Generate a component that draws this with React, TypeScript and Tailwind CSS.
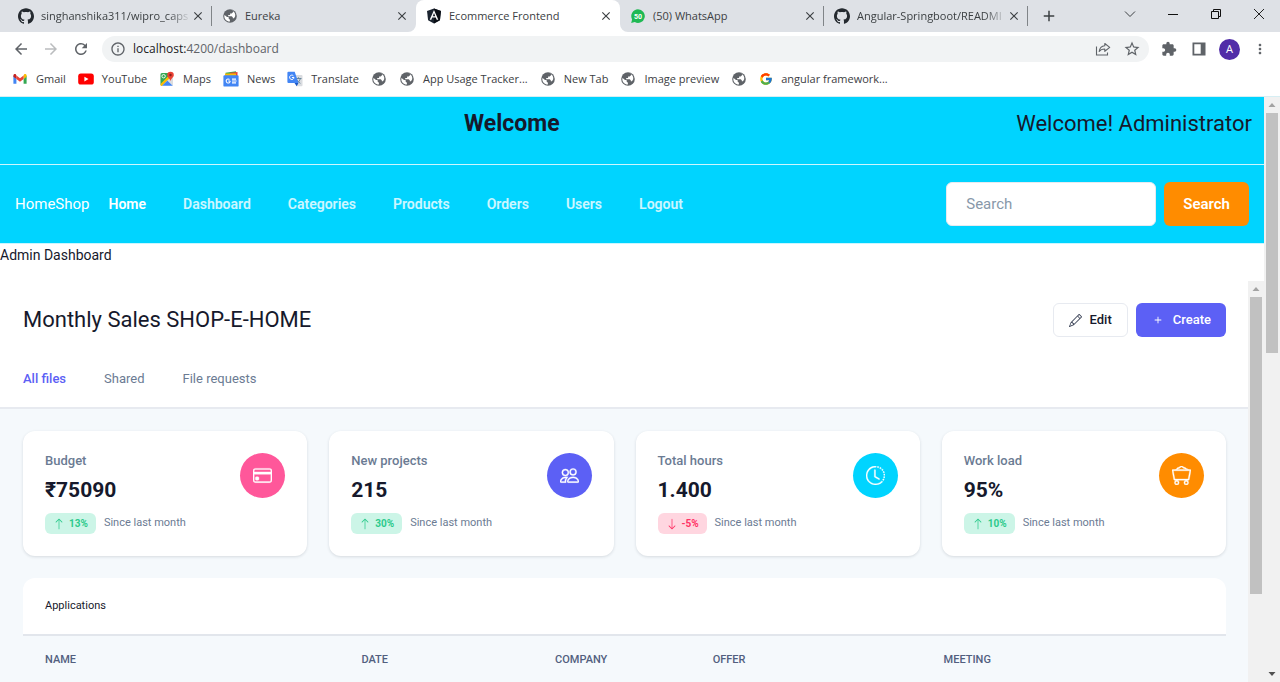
import React from "react";
import {
  BsArrowDown,
  BsArrowUp,
  BsClockHistory,
  BsCreditCard,
  BsMinecartLoaded,
  BsPencil,
  BsPlus,
} from "react-icons/bs";
import { SiGithub } from "react-icons/si";
import { FcGoogle } from "react-icons/fc";
import {
  MdArrowBack,
  MdArrowForward,
  MdAdd,
  MdClose,
  MdExtension,
  MdInfoOutline,
  MdMoreVert,
  MdRefresh,
  MdStarBorder,
} from "react-icons/md";

/* ---------- Browser icons ---------- */

function Globe() {
  return (
    <svg viewBox="0 0 16 16" className="size-4 shrink-0" aria-hidden="true">
      <circle cx="8" cy="8" r="6.8" fill="#5f6368" />
      <path
        d="M2.6 6.9 5 9.1h1.6v1.5l1.3 1.2v1.7c-3 .2-5.7-2.3-5.6-5.5zM7.2 2.5l3.4.1.6 1.3-1.5 1.7H8.1v1.5H6.2v1.1h3.5l1.1 1.1v.9h1.2l1.2-1.9c.6-2.6-1-5-3.2-5.8z"
        fill="#fff"
      />
    </svg>
  );
}

function AngularLogo() {
  return (
    <svg viewBox="0 0 16 16" className="size-4 shrink-0" aria-hidden="true">
      <path d="M8 .4 15 2.9 13.9 12.3 8 15.6 2.1 12.3 1 2.9z" fill="#1b2430" />
      <path d="M8 .4v15.2l5.9-3.3L15 2.9z" fill="#0b0f16" />
      <path
        d="M8 2.1 3.7 11.8h1.6l.9-2.2h3.6l.9 2.2h1.6zM8 5.1l1.2 3.2H6.8z"
        fill="#fff"
        fillRule="evenodd"
      />
    </svg>
  );
}

function WhatsApp() {
  return (
    <svg viewBox="0 0 16 16" className="size-4 shrink-0" aria-hidden="true">
      <path
        d="M8 1.3a6.8 6.8 0 1 1-3.2 12.8L1.2 14.9l.9-3.5A6.8 6.8 0 0 1 8 1.3z"
        fill="#1fb954"
      />
      <text
        x="8"
        y="10.6"
        textAnchor="middle"
        fill="#fff"
        fontFamily="Roboto, sans-serif"
        fontWeight="700"
        fontSize="7"
      >
        50
      </text>
    </svg>
  );
}

function Gmail() {
  return (
    <svg viewBox="0 0 16 16" className="size-4 shrink-0" aria-hidden="true">
      <path d="M1.4 4.5v8.3h3V8z" fill="#4285f4" />
      <path d="M14.6 4.5v8.3h-3V8z" fill="#34a853" />
      <path d="M11.6 4.6V8l3-2.3V4.500c0-1.300-1.400-1.900-2.400-1.200z" fill="#fbbc04" />
      <path d="M4.4 8V4.600L8 7.200l3.600-2.600V8L8 10.700z" fill="#ea4335" />
      <path d="M1.4 4.500v1.200L4.400 8V4.600l-.6-1.300c-1-.7-2.400-.1-2.400 1.200z" fill="#c5221f" />
    </svg>
  );
}

function YouTube() {
  return (
    <svg viewBox="0 0 16 16" className="size-4 shrink-0" aria-hidden="true">
      <rect x=".2" y="2.600" width="15.600" height="10.900" rx="2.600" fill="#f00" />
      <path d="M6.400 5.700v4.700L10.500 8z" fill="#fff" />
    </svg>
  );
}

function Maps() {
  return (
    <svg viewBox="0 0 16 16" className="size-4 shrink-0" aria-hidden="true">
      <path d="M1.500 2.500H14v12H1.500z" fill="#e8eaed" />
      <path d="M1.500 3.500A1.500 1.500 0 0 1 3 2h7L9 6l-7.500 8z" fill="#34a853" />
      <path d="m1.500 13 9-9L12 6l-9 9h-.5a1 1 0 0 1-1-1z" fill="#fbbc04" />
      <path d="m3 14.700 5.500-5.200 5.300 5.200z" fill="#4285f4" />
      <path d="m8.500 9.500 5.500 5V7z" fill="#dadce0" />
      <circle cx="4.600" cy="5.200" r="1.700" fill="none" stroke="#fff" strokeWidth=".9" />
      <path d="M11.500.7A3.300 3.300 0 0 1 14.800 4c0 2.600-2.500 3-3.300 6-.8-3-3.300-3.400-3.300-6A3.300 3.300 0 0 1 11.500.7z" fill="#ea4335" />
      <circle cx="11.500" cy="4" r="1.200" fill="#8c1d18" />
    </svg>
  );
}

function News() {
  return (
    <svg viewBox="0 0 16 16" className="size-4 shrink-0" aria-hidden="true">
      <path d="M2.500 1.700 13 .3v4.400H3z" fill="#34a853" />
      <path d="M7 1.700 14.500 1v5H7z" fill="#ea4335" />
      <path d="M2 2.500h11V7H2z" fill="#fbbc04" />
      <rect x=".4" y="4.200" width="15.200" height="11.400" rx="1.200" fill="#4285f4" />
      <path d="M7.200 10H5.200m1.300-1.500a2 2 0 1 0 .7 1.500" fill="none" stroke="#fff" strokeWidth="1.100" />
      <path d="M9 8.100h4M9 10h4.600M9 11.900h4" stroke="#fff" strokeWidth="1.100" />
    </svg>
  );
}

function Translate() {
  return (
    <svg viewBox="0 0 16 16" className="size-4 shrink-0" aria-hidden="true">
      <path d="M6 4h8.500a1 1 0 0 1 1 1v9.300a1 1 0 0 1-1 1h-5z" fill="#dadce0" />
      <path d="M8.500 7.500h6M11.500 6.300v1.200M13.300 7.600c-.4 2-2 3.800-3.600 4.600M9.800 8.800c.8 1.600 2.200 2.800 3.600 3.500" fill="none" stroke="#5f7f95" strokeWidth=".9" />
      <path d="M1.400.7h6.300l3.800 11.400H1.400a1 1 0 0 1-1-1V1.700a1 1 0 0 1 1-1z" fill="#4285f4" />
      <path d="m7.500 12.100 2.200 3.200 1.800-3.200z" fill="#1a56c4" />
      <path d="M7 6.500H4.900m1.500-1.700A2.200 2.200 0 1 0 7 6.500" fill="none" stroke="#fff" strokeWidth="1" />
    </svg>
  );
}

function Share() {
  return (
    <svg viewBox="0 0 16 16" className="size-4" fill="none" stroke="#5f6368" strokeWidth="1.100" aria-hidden="true">
      <path d="M1.500 5.500V14h11v-2.500" />
      <path d="M9.800 2.500 14.700 6.400 9.800 10.300V8c-2.600 0-4.400.7-5.600 2.500.4-3.300 2.300-5.400 5.600-5.700z" strokeLinejoin="round" />
    </svg>
  );
}

function SidePanel() {
  return (
    <svg viewBox="0 0 16 16" className="size-4" aria-hidden="true">
      <path d="M1.500 1.500h13v13h-13zM3.300 3.200v9.600h6.400V3.200z" fill="#5f6368" fillRule="evenodd" />
    </svg>
  );
}

/* Two outlined figures, side by side */
function People() {
  return (
    <svg viewBox="0 0 16 16" className="size-[19px] stroke-current [stroke-width:0.3]" fill="currentColor" aria-hidden="true">
      <path d="M15 14s1 0 1-1-1-4-5-4-5 3-5 4 1 1 1 1h8zm-7.978-1A.261.261 0 0 1 7 12.996c.001-.264.167-1.030.760-1.720C8.312 10.629 9.282 10 11 10c1.717 0 2.687.630 3.240 1.276.593.690.758 1.457.760 1.720l-.008.002a.274.274 0 0 1-.014.002H7.022zM11 7a2 2 0 1 0 0-4 2 2 0 0 0 0 4zm3-2a3 3 0 1 1-6 0 3 3 0 0 1 6 0zM6.936 9.280a5.880 5.880 0 0 0-1.230-.247A7.350 7.350 0 0 0 5 9c-4 0-5 3-5 4 0 .667.333 1 1 1h4.216A2.238 2.238 0 0 1 5 13c0-1.010.377-2.042 1.090-2.904.243-.294.526-.569.846-.816zM4.920 10A5.493 5.493 0 0 0 4 13H1c0-.260.164-1.030.760-1.724.545-.636 1.492-1.256 3.160-1.275zM1.500 5.500a3 3 0 1 1 6 0 3 3 0 0 1-6 0zm3-2a2 2 0 1 0 0 4 2 2 0 0 0 0-4z" />
    </svg>
  );
}

/* ---------- Browser frame ---------- */

type Tab = { title: string; icon: React.ReactNode; active?: boolean; divider?: boolean; fade?: boolean };

const tabs: Tab[] = [
  { title: "singhanshika311/wipro_caps", icon: <SiGithub className="size-4 shrink-0 text-[#24292f]" />, divider: true, fade: true },
  { title: "Eureka", icon: <Globe /> },
  { title: "Ecommerce Frontend", icon: <AngularLogo />, active: true },
  { title: "(50) WhatsApp", icon: <WhatsApp />, divider: true },
  { title: "Angular-Springboot/READMI", icon: <SiGithub className="size-4 shrink-0 text-[#24292f]" />, divider: true, fade: true },
];

/* Curved feet where the active tab meets the toolbar */
function TabFeet() {
  return (
    <>
      <svg viewBox="0 0 8 8" className="absolute bottom-0 -left-2 size-2" fill="#fff" aria-hidden="true">
        <path d="M8 0v8H0a8 8 0 0 0 8-8z" />
      </svg>
      <svg viewBox="0 0 8 8" className="absolute -right-2 bottom-0 size-2" fill="#fff" aria-hidden="true">
        <path d="M0 0v8h8a8 8 0 0 1-8-8z" />
      </svg>
    </>
  );
}

function TabStrip() {
  return (
    <div className="flex h-8 shrink-0 items-stretch bg-[#dee1e6] pl-2">
      {tabs.map((tab) => (
        <div
          key={tab.title}
          className={
            tab.active
              ? "relative flex w-51 items-center rounded-t-lg bg-white pl-2.5"
              : "flex w-51 items-center pl-2.5"
          }
        >
          {tab.active && <TabFeet />}
          {tab.icon}
          <span
            className={
              tab.fade
                ? "ml-[7px] min-w-0 flex-1 overflow-hidden whitespace-nowrap mask-r-from-85%"
                : "ml-[7px] min-w-0 flex-1 whitespace-nowrap"
            }
          >
            {tab.title}
          </span>
          <button aria-label={`Close ${tab.title}`} className="shrink-0">
            <MdClose className="size-3.5 text-[#3c4043]" />
          </button>
          <span className={tab.divider ? "ml-1.5 h-5 w-px bg-[#808488]" : "ml-1.5 h-5 w-px"} />
        </div>
      ))}
      <button aria-label="New tab" className="ml-3 self-center">
        <MdAdd className="size-4.5 text-[#3c4043]" />
      </button>
      <div className="ml-auto flex items-start pt-1.5">
        <button aria-label="Search tabs" className="flex h-4 w-[43px] items-center justify-center">
          <svg viewBox="0 0 12 12" className="size-3" fill="none" stroke="#3c4043">
            <path d="m1 3.500 5 5 5-5" />
          </svg>
        </button>
        <button aria-label="Minimize" className="flex h-4 w-[43px] items-center justify-center">
          <svg viewBox="0 0 12 12" className="size-3" fill="none" stroke="#111">
            <path d="M1 6.500h10" />
          </svg>
        </button>
        <button aria-label="Restore" className="flex h-4 w-[43px] items-center justify-center">
          <svg viewBox="0 0 12 12" className="size-3" fill="none" stroke="#111">
            <path d="M1.500 3.500h7v7h-7zM3.500 3.500v-2h7v7h-2" />
          </svg>
        </button>
        <button aria-label="Close window" className="flex h-4 w-[43px] items-center justify-center">
          <svg viewBox="0 0 12 12" className="size-3" fill="none" stroke="#222">
            <path d="m1 1 10 10M11 1 1 11" />
          </svg>
        </button>
      </div>
    </div>
  );
}

function Toolbar() {
  return (
    <div className="flex h-8.5 shrink-0 items-center bg-white px-3 text-[#5f6368]">
      <button aria-label="Back"><MdArrowBack className="size-4.5" /></button>
      <button aria-label="Forward" className="ml-3 text-[#babcbe]"><MdArrowForward className="size-4.5" /></button>
      <button aria-label="Reload" className="ml-3"><MdRefresh className="size-4.5" /></button>
      <div className="ml-3 flex h-6.5 min-w-0 flex-1 items-center rounded-full bg-[#f1f3f4] pr-2 pl-2">
        <MdInfoOutline className="size-4" />
        <a href="#dashboard" className="ml-[7px] flex-1 text-xs text-[#5f6368]">
          <span className="text-[#202124]">localhost:</span>4200/dashboard
        </a>
        <button aria-label="Share"><Share /></button>
        <button aria-label="Bookmark this page" className="ml-3"><MdStarBorder className="size-4.5" /></button>
      </div>
      <button aria-label="Extensions" className="ml-3"><MdExtension className="size-4" /></button>
      <button aria-label="Side panel" className="ml-3.5"><SidePanel /></button>
      <button aria-label="Profile" className="ml-3 flex size-[21px] items-center justify-center rounded-full bg-[#512da8] text-[11px] text-white">A</button>
      <button aria-label="More" className="ml-3"><MdMoreVert className="size-4" /></button>
    </div>
  );
}

const bookmarks: { label: string; icon: React.ReactNode }[] = [
  { label: "Gmail", icon: <Gmail /> },
  { label: "YouTube", icon: <YouTube /> },
  { label: "Maps", icon: <Maps /> },
  { label: "News", icon: <News /> },
  { label: "Translate", icon: <Translate /> },
  { label: "", icon: <Globe /> },
  { label: "App Usage Tracker...", icon: <Globe /> },
  { label: "New Tab", icon: <Globe /> },
  { label: "Image preview", icon: <Globe /> },
  { label: "", icon: <Globe /> },
  { label: "angular framework...", icon: <FcGoogle className="size-3.5 shrink-0" /> },
];

function Bookmarks() {
  return (
    <div className="flex h-7.5 shrink-0 items-center gap-3 bg-white pb-1 pl-3 text-[#3c4043]">
      {bookmarks.map((b, i) => (
        <a key={i} href="#bookmark" aria-label={b.label || "Bookmark"} className="flex items-center gap-2 whitespace-nowrap">
          {b.icon}
          {b.label && <span>{b.label}</span>}
        </a>
      ))}
    </div>
  );
}

/* ---------- Page ---------- */

const navLinks = ["Home", "Dashboard", "Categories", "Products", "Orders", "Users", "Logout"];

function SiteHeader() {
  return (
    <header className="bg-[#00d4ff]">
      <div className="flex h-[68px] justify-between border-b border-white/80 px-3 pt-[9px] leading-9 text-[#16192c]">
        <h1 className="pl-[452px] text-[23px] font-bold">Welcome</h1>
        <p className="text-[22px]">Welcome! Administrator</p>
      </div>
      <nav className="flex h-[79px] items-center border-b border-[#c9f6ff] px-[15px] text-white">
        <a href="#home" className="text-[15px]">HomeShop</a>
        <div className="ml-[19px] flex gap-[37px] text-sm font-semibold">
          {navLinks.map((l) => (
            <a key={l} href={`#${l.toLowerCase()}`} className={l === "Home" ? "text-white" : "text-white/80"}>
              {l}
            </a>
          ))}
        </div>
        <form className="ml-auto flex gap-2" onSubmit={(e) => e.preventDefault()}>
          <input
            type="search"
            aria-label="Search"
            placeholder="Search"
            className="h-11 w-[210px] rounded-md border border-[#e7eaf0] bg-white px-[19px] text-[15px] text-[#16192c] placeholder:text-[#8898a9]"
          />
          <button className="h-11 rounded-md bg-[#ff8c00] px-[19px] text-[15px] font-semibold text-white">Search</button>
        </form>
      </nav>
    </header>
  );
}

const statIcon = "size-[19px] [stroke-width:0.3]";

const stats = [
  { label: "Budget", value: "₹75090", change: "13%", up: true, color: "bg-[#ff579a]", icon: <BsCreditCard className={statIcon} /> },
  { label: "New projects", value: "215", change: "30%", up: true, color: "bg-[#5c60f5]", icon: <People /> },
  { label: "Total hours", value: "1.400", change: "-5%", up: false, color: "bg-[#00d4ff]", icon: <BsClockHistory className={statIcon} /> },
  { label: "Work load", value: "95%", change: "10%", up: true, color: "bg-[#ff8c00]", icon: <BsMinecartLoaded className={statIcon} /> },
];

function StatCard({ stat }: { stat: (typeof stats)[number] }) {
  return (
    <article className="flex justify-between rounded-xl bg-white p-[22px] shadow-[0_1px_3px_rgba(31,45,61,0.15)]">
      <div>
        <h2 className="text-[13px] leading-4 font-medium text-[#6b7b93]">{stat.label}</h2>
        <p className="mt-1.5 text-[21px] leading-[30px] font-bold text-[#16192c]">{stat.value}</p>
        <div className="mt-2 flex items-center gap-2 text-[11px] text-[#6b7b93]">
          <span
            className={
              stat.up
                ? "flex h-[21px] items-center gap-1 rounded-md bg-[#ccf5e7] px-2 text-[10px] font-bold text-[#2dca8c]"
                : "flex h-[21px] items-center gap-1 rounded-md bg-[#ffd6e0] px-2 text-[10px] font-bold text-[#ff3366]"
            }
          >
            {stat.up ? <BsArrowUp className="size-3" /> : <BsArrowDown className="size-3" />}
            {stat.change}
          </span>
          <span>Since last month</span>
        </div>
      </div>
      <div className={`flex size-[45px] items-center justify-center rounded-full text-white ${stat.color}`}>{stat.icon}</div>
    </article>
  );
}

const columns = [
  { name: "Name", width: "w-[26.3%]" },
  { name: "Date", width: "w-[16.1%]" },
  { name: "Company", width: "w-[13.1%]" },
  { name: "Offer", width: "w-[19.2%]" },
  { name: "Meeting", width: "w-[25.3%]" },
];

function Dashboard() {
  return (
    <div className="min-w-0 flex-1 overflow-hidden bg-[#f5f9fc]">
      <header className="border-b-2 border-[#e7eaf0] bg-white pt-[22px] pr-[22px] pl-[23px]">
        <div className="flex items-center justify-between">
          <h1 className="text-[22px] leading-8 text-[#16192c]">Monthly Sales SHOP-E-HOME</h1>
          <div className="flex gap-2 text-[13px] font-medium">
            <button className="flex h-[34px] items-center gap-2 rounded-md border border-[#e7eaf0] px-[15px] text-[#16192c]">
              <BsPencil className="size-[13px] text-[#3a4256]" />
              Edit
            </button>
            <button className="flex h-[34px] items-center gap-2 rounded-md bg-[#5c60f5] px-[15px] text-white">
              <BsPlus className="size-3.5" />
              Create
            </button>
          </div>
        </div>
        <nav className="mt-[22px] flex h-12 items-start gap-[38px] pt-2.5 text-[13px] text-[#6b7b93]">
          <a href="#all" className="font-medium text-[#5c60f5]">All files</a>
          <a href="#shared">Shared</a>
          <a href="#requests">File requests</a>
        </nav>
      </header>
      <main className="flex flex-col gap-[22px] pt-[22px] pr-[22px] pl-[23px]">
        <section className="grid grid-cols-4 gap-[22px]">
          {stats.map((s) => (
            <StatCard key={s.label} stat={s} />
          ))}
        </section>
        <section className="overflow-hidden rounded-t-xl bg-[#f5f9fc]">
          <h2 className="border-b-2 border-[#e2e6ec] bg-white px-[22px] py-5 text-[11px] leading-4 text-[#16192c]">Applications</h2>
          <table className="w-full table-fixed text-left">
            <thead>
              <tr className="h-12 text-[11px] text-[#525f7f] uppercase">
                {columns.map((c) => (
                  <th key={c.name} scope="col" className={`pl-[22px] font-medium ${c.width}`}>
                    {c.name}
                  </th>
                ))}
              </tr>
            </thead>
          </table>
        </section>
      </main>
    </div>
  );
}

function ScrollArrow({ down, color }: { down?: boolean; color: string }) {
  return (
    <svg viewBox="0 0 16 16" className="size-4 shrink-0" fill={color} aria-hidden="true">
      <path d={down ? "M4.500 6h7L8 10z" : "M4.500 10h7L8 6z"} />
    </svg>
  );
}

export default function App() {
  return (
    <div className="flex h-screen flex-col overflow-hidden bg-white font-['Roboto',sans-serif]">
      <div className="shrink-0 border-b border-[#d6eef3] font-['Open_Sans','Noto_Sans',sans-serif] text-[11px] text-[#3c4043]">
        <TabStrip />
        <Toolbar />
        <Bookmarks />
      </div>
      <div className="flex min-h-0 flex-1">
        <div className="flex min-w-0 flex-1 flex-col">
          <SiteHeader />
          <p className="h-[37px] text-sm leading-[22px] text-[#16192c]">Admin Dashboard</p>
          <div className="flex min-h-0 flex-1">
            <Dashboard />
            <div className="flex w-4 shrink-0 flex-col items-center bg-[#f1f1f1]">
              <ScrollArrow color="#a3a3a3" />
              <div className="h-[74%] w-3 bg-[#c1c1c1]" />
            </div>
          </div>
        </div>
        <div className="flex w-4 shrink-0 flex-col items-center bg-[#f1f1f1]">
          <ScrollArrow color="#a3a3a3" />
          <div className="h-[41%] w-3 bg-[#c1c1c1]" />
          <div className="flex-1" />
          <ScrollArrow down color="#505050" />
        </div>
      </div>
    </div>
  );
}
